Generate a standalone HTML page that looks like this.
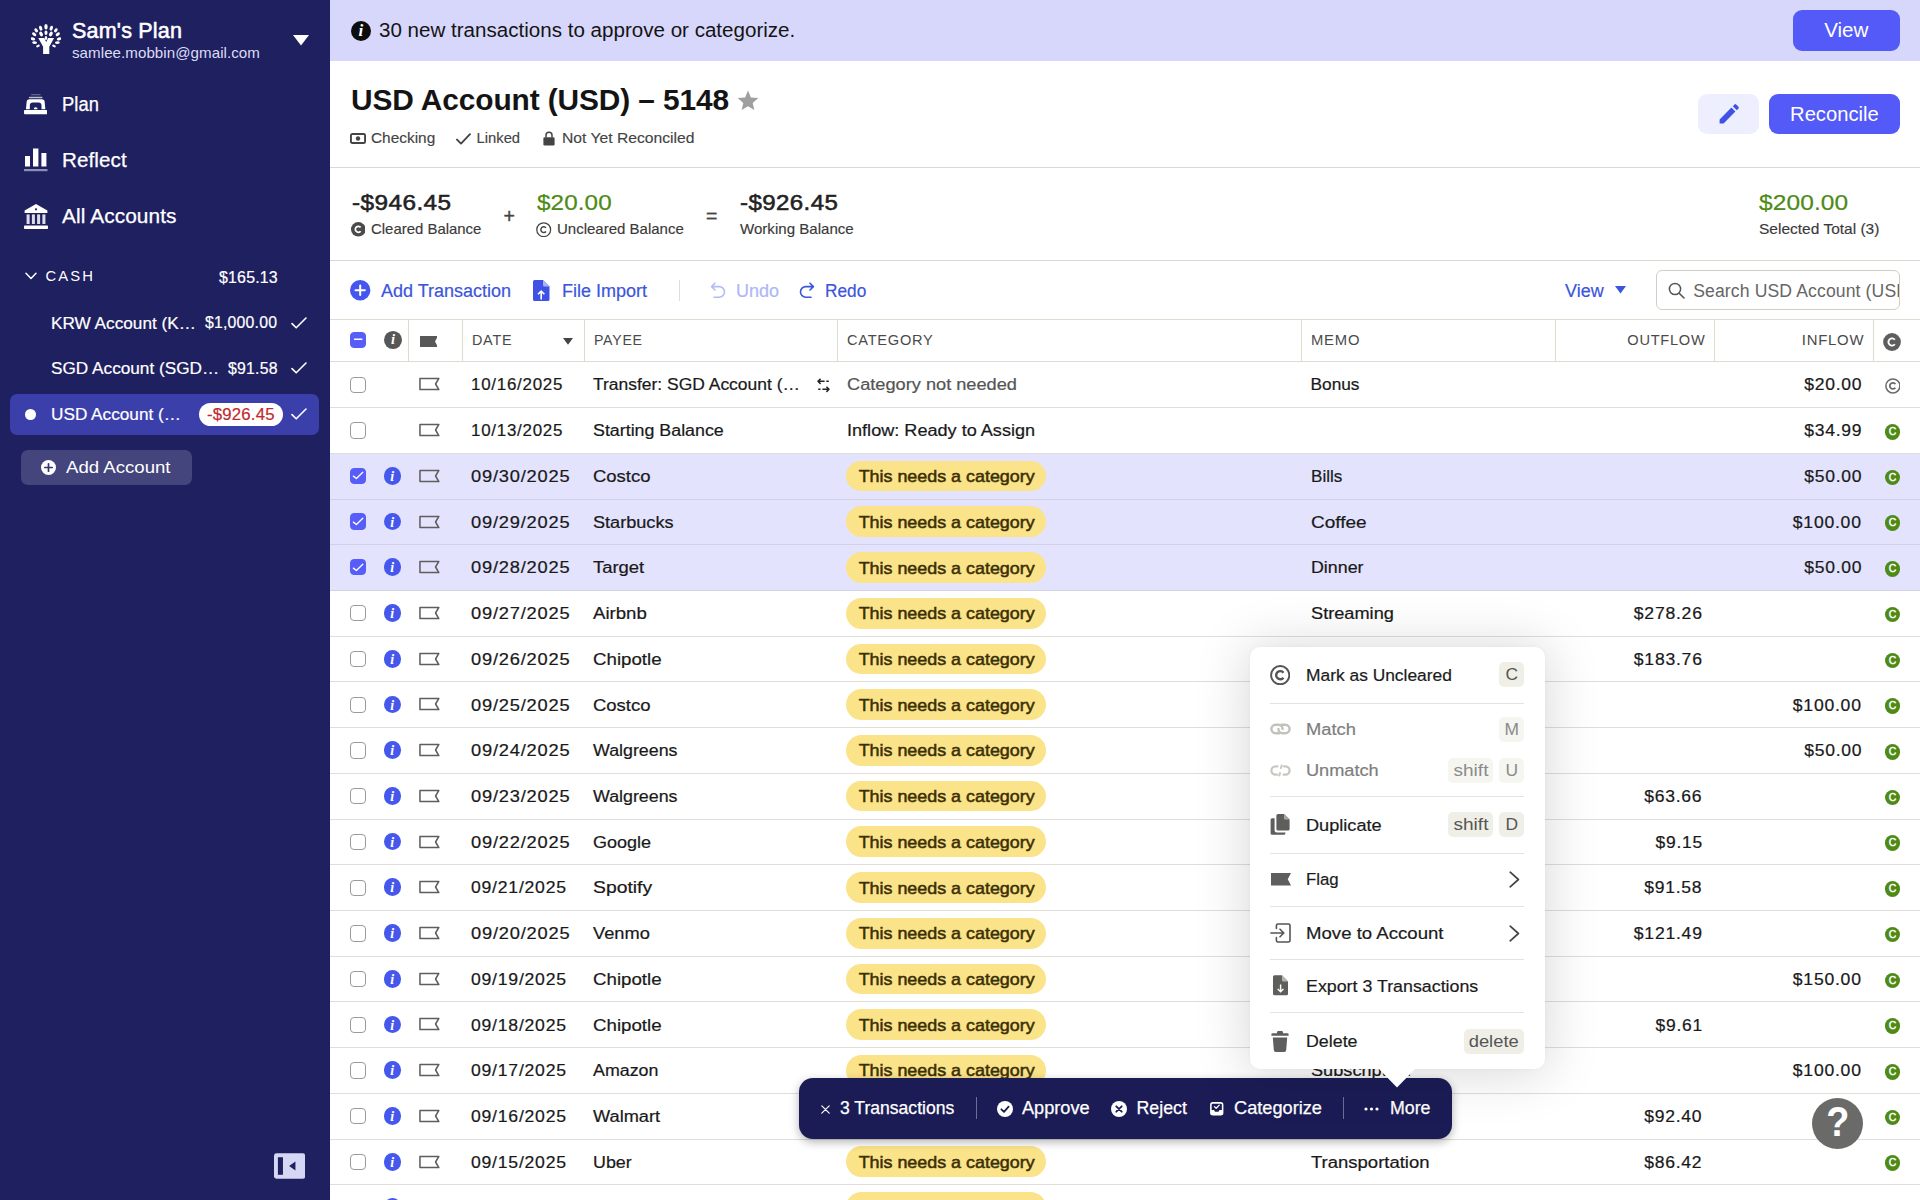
<!DOCTYPE html>
<html lang="en">
<head>
<meta charset="utf-8">
<title>USD Account (USD) – 5148 | Sam's Plan</title>
<style>
*{box-sizing:border-box;margin:0;padding:0}
html,body{width:1920px;height:1200px;overflow:hidden;background:#fff}
body{font-family:"Liberation Sans",Arial,sans-serif;color:#19191a;position:relative;-webkit-font-smoothing:antialiased}
.abs{position:absolute;white-space:nowrap}
svg{display:block}

/* ---------- sidebar ---------- */
#side{position:absolute;left:0;top:0;width:330px;height:1200px;background:#1f205f;color:#fff}
#side .abs{color:#fff}
.nav{font-size:19.5px;left:61.5px;letter-spacing:.1px;-webkit-text-stroke:.25px #fff}
.acct{font-size:17.2px;left:51px}
.amt{font-size:15.6px;letter-spacing:.2px}
.tick{position:absolute;left:291px}

/* ---------- main ---------- */
#main{position:absolute;left:330px;top:0;width:1590px;height:1200px;background:#fff;overflow:hidden}
#banner{position:absolute;left:0;top:0;width:1590px;height:60.5px;background:#d7d7fb}
.btn{position:absolute;background:#535af7;color:#fff;border-radius:9px;text-align:center}
.hl{position:absolute;left:0;width:1590px;height:1px;background:#d9d9d0}
.meta{font-size:14.8px;color:#444;top:130px;line-height:17px}
.bal{font-size:22.6px;font-weight:normal;-webkit-text-stroke:.55px #222;letter-spacing:.4px;top:189.800px;line-height:26px;color:#222}
.bal.g{color:#4d8a16;-webkit-text-stroke:.2px #4d8a16}
.ballab{font-size:14.8px;color:#3a3a3a;top:220.5px;line-height:17px}
.tb{font-size:18px;color:#3b55dd;-webkit-text-stroke:.2px currentColor;top:281px;line-height:21px}

/* ---------- table ---------- */
#thead{position:absolute;left:0;top:319.25px;width:1590px;height:42.7px;border-top:1.5px solid #dcdcd2;border-bottom:1.5px solid #dcdcd2;background:#fff;z-index:2}
.th{position:absolute;top:12.2px;font-size:14.6px;letter-spacing:.75px;color:#4a4a4a;line-height:17px;white-space:nowrap}
.vl{position:absolute;top:0;width:1px;height:41px;background:#dcdcd1}
.row{position:absolute;left:0;width:1590px;height:45.72px;border-bottom:1.3px solid #dedfd6;font-size:17.3px;line-height:20px;background:#fff}
.row.sel{background:#e3e3fd;border-bottom-color:#d2d2e6}
.row>*{position:absolute;white-space:nowrap}
.cb{left:20px;top:14.200px;width:16.3px;height:16.3px;border:1.4px solid #9a9a9a;border-radius:4px;background:#fff}
.cb.on{background:#575df8;border-color:#575df8;top:13.800px}
.cb.on svg{position:absolute;left:-1.4px;top:-1.4px}
.inf{left:53.7px;top:13.1px;width:17.8px;height:17.8px;border-radius:50%;background:#4658ec;color:#fff;font-family:"Liberation Serif","DejaVu Serif",serif;font-style:italic;font-weight:bold;font-size:14px;line-height:19.6px;text-align:center;text-indent:-.6px}
.flag{left:89.1px;top:15px}
.c-date{left:140.5px;top:12.1px}
.c-payee{left:262.5px;top:12.1px}
.xfer{left:487.100px;top:15.400px}
.c-cat{left:517px;top:12.1px}
.c-cat.muted{color:#555}
.pill{left:516.2px;top:6.8px;width:200px;height:30.8px;border-radius:15.4px;background:#fbe389;color:#3a2f05;font-weight:normal;-webkit-text-stroke:.5px #3a2f05;font-size:16.600px;line-height:30.8px;text-align:center}
.c-memo{left:980.5px;top:12.1px}
.c-out{right:217.2px;top:12.1px}
.c-in{right:58px;top:12.1px}
.unclr{left:1554.600px;top:15.700px}
.clr{left:1554.7px;top:15.8px;width:15.6px;height:15.6px;border-radius:50%;background:#4f8a17;color:#fff;font-weight:normal;-webkit-text-stroke:.4px #fff;font-size:10.4px;line-height:15.4px;text-align:center}

/* ---------- popup ---------- */
#menu{z-index:6;position:absolute;left:1250px;top:647px;width:295px;height:422px;background:#fff;border-radius:10px;box-shadow:0 2px 52px 4px rgba(0,0,0,.15),0 0 5px rgba(0,0,0,.03)}
#menu .mi{position:absolute;left:56px;font-size:17.1px;line-height:21px;color:#1b1b1b;white-space:nowrap}
#menu .mi.dis{color:#7d7d7d}
#menu .ico{position:absolute;left:20px}
#menu .dv{position:absolute;left:19.8px;width:254.6px;height:1px;background:#e3e3e0}
.key{position:absolute;height:25px;border-radius:5px;background:#efefe7;color:#555;font-size:17.4px;line-height:25px;text-align:center}
.key.dis{background:#f6f6f1;color:#8a8a8a}

/* ---------- action bar ---------- */
#bar{z-index:5;position:absolute;left:799px;top:1078px;width:652.5px;height:60.5px;border-radius:14px;background:#1b1c55;box-shadow:0 3px 10px rgba(0,0,0,.3)}
#bar .t{position:absolute;top:20.100px;font-size:17.800px;line-height:21px;color:#fff;white-space:nowrap;-webkit-text-stroke:.25px #fff}
#bar .sep{position:absolute;top:19px;width:1.3px;height:22px;background:#6c6d96}
#help{position:absolute;left:1812px;top:1097.8px;width:51px;height:51px;border-radius:50%;background:#6a6a69;color:#fff;font-weight:bold;font-size:42px;line-height:48.5px;text-align:center}
.abs,.row>*,.th,.mi,.t{transform-origin:left center}
.c-out,.c-in,.th.r{transform-origin:right center}
.pt,.ct{display:inline-block;transform-origin:center center}
.pt{position:relative;top:1.500px}
.c-date,.c-out,.c-in{letter-spacing:.75px}
.c-date,.c-payee,.c-cat,.c-memo,.c-out,.c-in{-webkit-text-stroke:.22px currentColor}
.acct,.amt{-webkit-text-stroke:.2px currentColor}
#menu .mi{-webkit-text-stroke:.2px currentColor}
.ballab,.meta{-webkit-text-stroke:.15px currentColor}
#t2{transform:scaleX(0.941)}
#t22{transform:scaleX(0.959)}
#t0{transform:scaleX(0.962)}
#t24{transform:scaleX(0.969)}
#t29,#t34{transform:scaleX(0.98)}
#t115{transform:scaleX(0.984)}
#t23{transform:scaleX(0.985)}
#t41,#t120{transform:scaleX(0.988)}
#t77,#t93{transform:scaleX(1.008)}
#t15{transform:scaleX(1.009)}
#t30{transform:scaleX(1.01)}
#t6,#t17,#t33,#t37,#t42,#t52,#t69,#t73,#t81,#t102,#t107{transform:scaleX(1.014)}
#t7,#t26{transform:scaleX(1.016)}
#t109{transform:scaleX(1.017)}
#t47,#t57,#t61,#t65,#t85,#t89,#t98{transform:scaleX(1.018)}
#t19,#t78,#t86,#t90,#t94,#t99,#t103{transform:scaleX(1.019)}
#t5,#t28{transform:scaleX(1.02)}
#t121{transform:scaleX(1.021)}
#t11,#t122{transform:scaleX(1.023)}
#t35,#t51,#t67,#t71,#t95{transform:scaleX(1.031)}
#t104{transform:scaleX(1.033)}
#t1{transform:scaleX(1.036)}
#t12,#t75{transform:scaleX(1.041)}
#t117,#t118{transform:scaleX(1.042)}
#t36{transform:scaleX(1.047)}
#t21,#t44{transform:scaleX(1.048)}
#t10{transform:scaleX(1.05)}
#t97{transform:scaleX(1.051)}
#t56{transform:scaleX(1.052)}
#t31{transform:scaleX(1.053)}
#t100{transform:scaleX(1.054)}
#t119{transform:scaleX(1.055)}
#t3{transform:scaleX(1.056)}
#t38,#t43,#t48,#t53,#t58,#t62,#t66,#t70,#t74,#t82,#t83{transform:scaleX(1.057)}
#t13{transform:scaleX(1.06)}
#t113{transform:scaleX(1.062)}
#t111{transform:scaleX(1.063)}
#t18{transform:scaleX(1.064)}
#t4,#t49{transform:scaleX(1.067)}
#t39,#t63{transform:scaleX(1.069)}
#t106,#t110{transform:scaleX(1.07)}
#t8{transform:scaleX(1.072)}
#t16{transform:scaleX(1.073)}
#t54{transform:scaleX(1.076)}
#t14{transform:scaleX(1.077)}
#t40,#t45,#t50,#t55,#t60,#t64,#t68,#t72,#t76,#t80,#t84,#t88,#t92,#t96,#t101,#t105,#t108{transform:scaleX(1.078)}
#t59,#t87,#t91{transform:scaleX(1.082)}
#t9{transform:scaleX(1.083)}
#t20{transform:scaleX(1.084)}
#t116{transform:scaleX(1.088)}
#t112,#t114{transform:scaleX(1.097)}
#t46{transform:scaleX(1.099)}
#t79{transform:scaleX(1.118)}
</style>
</head>
<body>

<div id="side">
  <!-- logo tree -->
  <svg class="abs" style="left:30.600px;top:24px" width="30.400" height="30" viewBox="0 0 30.400 30"><g fill="#fff"><path d="M7.3 14.100H13.300L15.200 17.900 17.100 14.100H23.100L18.300 22.800V30H12.100V22.800Z"/><ellipse cx="15" cy="2.8" rx="1.7" ry="2.7" transform="rotate(0 15 2.8)"/><ellipse cx="9.7" cy="4.2" rx="1.55" ry="2.5" transform="rotate(-20 9.7 4.2)"/><ellipse cx="20.3" cy="4.2" rx="1.55" ry="2.5" transform="rotate(20 20.3 4.2)"/><ellipse cx="5.2" cy="6.3" rx="1.5" ry="2.3" transform="rotate(-38 5.2 6.3)"/><ellipse cx="24.8" cy="6.3" rx="1.5" ry="2.3" transform="rotate(38 24.8 6.3)"/><ellipse cx="3.2" cy="10.2" rx="1.5" ry="2.4" transform="rotate(-53 3.2 10.2)"/><ellipse cx="10.1" cy="10" rx="1.7" ry="2.5" transform="rotate(-29 10.1 10)"/><ellipse cx="15" cy="8.8" rx="1.5" ry="2.3" transform="rotate(0 15 8.8)"/><ellipse cx="19.9" cy="10" rx="1.7" ry="2.5" transform="rotate(29 19.9 10)"/><ellipse cx="26.8" cy="10.2" rx="1.5" ry="2.4" transform="rotate(53 26.8 10.2)"/><ellipse cx="1.9" cy="14.8" rx="1.45" ry="2.3" transform="rotate(-72 1.9 14.8)"/><ellipse cx="28.1" cy="14.8" rx="1.45" ry="2.3" transform="rotate(72 28.1 14.8)"/><ellipse cx="15" cy="13.9" rx="1.3" ry="2.0" transform="rotate(0 15 13.9)"/><ellipse cx="3.6" cy="18.6" rx="1.45" ry="2.4" transform="rotate(-88 3.6 18.6)"/><ellipse cx="26.4" cy="18.6" rx="1.45" ry="2.4" transform="rotate(88 26.4 18.6)"/><ellipse cx="7" cy="22" rx="1.2" ry="1.9" transform="rotate(-111 7 22)"/><ellipse cx="23" cy="22" rx="1.2" ry="1.9" transform="rotate(111 23 22)"/></g></svg>
  <div id="t0" class="abs" style="left:71.5px;top:18px;font-size:22.4px;font-weight:normal;-webkit-text-stroke:.55px #fff;line-height:26px;letter-spacing:.2px">Sam's Plan</div>
  <div id="t1" class="abs" style="left:71.5px;top:44.5px;font-size:14.6px;line-height:17px;color:#dcdcf5;letter-spacing:.05px">samlee.mobbin@gmail.com</div>
  <svg class="abs" style="left:293px;top:34.5px" width="16" height="11" viewBox="0 0 16 11"><path d="M0 0H16L8 10.6Z" fill="#fff"/></svg>

  <!-- Plan -->
  <svg class="abs" style="left:24px;top:94px" width="23.300" height="20.500" viewBox="0 0 24 21">
    <g fill="#fff">
      <rect x="7.200" y=".1" width="10" height="1.100" rx=".5" opacity=".4"/>
      <rect x="5" y="2.700" width="14" height="1.500" rx=".6" opacity=".7"/>
      <path d="M2 15.600 2.700 8.200A3 3 0 0 1 5.700 5.400H18.300A3 3 0 0 1 21.300 8.200L22 15.600ZM6 15.600V11.600a3 3 0 0 1 3-3h6a3 3 0 0 1 3 3v4z" fill-rule="evenodd"/>
      <path d="M10 15.600a2 2 0 0 1 4 0z"/>
      <rect x="0" y="16.400" width="24" height="4.400" rx="1"/>
    </g>
  </svg>
  <div id="t2" class="abs nav" style="top:93px;line-height:23px">Plan</div>

  <!-- Reflect -->
  <svg class="abs" style="left:24px;top:148px" width="24" height="24" viewBox="0 0 24 24">
    <g fill="#fff">
      <rect x="1" y="8" width="5" height="10.5"/>
      <rect x="9" y="0.5" width="5.4" height="18"/>
      <rect x="17.4" y="5" width="5" height="13.5"/>
      <rect x="0" y="21" width="23.5" height="2.2" opacity=".5"/>
    </g>
  </svg>
  <div id="t3" class="abs nav" style="top:149px;line-height:23px">Reflect</div>

  <!-- All accounts -->
  <svg class="abs" style="left:24px;top:204px" width="24" height="26" viewBox="0 0 24 26">
    <g fill="#fff">
      <path d="M12 0 23.4 6.6V9H.6V6.6zM12 4.2a1.1 1.1 0 1 0 0 2.2 1.1 1.1 0 0 0 0-2.2z" fill-rule="evenodd"/>
      <rect x="2.6" y="10.4" width="3" height="9.6" opacity=".85"/>
      <rect x="7.9" y="10.4" width="3" height="9.6" opacity=".85"/>
      <rect x="13.1" y="10.4" width="3" height="9.6" opacity=".85"/>
      <rect x="18.4" y="10.4" width="3" height="9.6" opacity=".85"/>
      <rect x="0" y="21.6" width="24" height="3.4" rx=".8"/>
    </g>
  </svg>
  <div id="t4" class="abs nav" style="top:205px;line-height:23px">All Accounts</div>

  <!-- CASH group -->
  <svg class="abs" style="left:24.5px;top:271.5px" width="12" height="8" viewBox="0 0 12 8"><path d="M1 1.2 6 6.4 11 1.2" fill="none" stroke="#fff" stroke-width="1.5" stroke-linecap="round" stroke-linejoin="round"/></svg>
  <div class="abs" style="left:45.5px;top:267.5px;font-size:14.8px;line-height:17px;letter-spacing:2.1px">CASH</div>
  <div id="t5" class="abs amt" style="left:218.5px;top:269px;line-height:17px">$165.13</div>

  <div class="abs acct" style="top:312.5px;line-height:20px">KRW Account (K…</div>
  <div id="t6" class="abs amt" style="left:204.5px;top:314px;line-height:17px">$1,000.00</div>
  <svg class="tick" style="top:316.5px" width="16" height="12" viewBox="0 0 16 12"><path d="M1 6.6 5.2 10.8 15 1" fill="none" stroke="#fff" stroke-width="1.6" stroke-linecap="round" stroke-linejoin="round"/></svg>

  <div class="abs acct" style="top:358.2px;line-height:20px">SGD Account (SGD…</div>
  <div id="t7" class="abs amt" style="left:227.5px;top:359.8px;line-height:17px">$91.58</div>
  <svg class="tick" style="top:362.2px" width="16" height="12" viewBox="0 0 16 12"><path d="M1 6.6 5.2 10.8 15 1" fill="none" stroke="#fff" stroke-width="1.6" stroke-linecap="round" stroke-linejoin="round"/></svg>

  <div class="abs" style="left:10px;top:393.8px;width:308.8px;height:40.8px;border-radius:7px;background:#3b3fa9"></div>
  <div class="abs" style="left:25px;top:409px;width:10.6px;height:10.6px;border-radius:50%;background:#fff"></div>
  <div class="abs acct" style="top:404px;line-height:20px">USD Account (…</div>
  <div class="abs" style="left:198.8px;top:402.6px;width:84.6px;height:23px;border-radius:11.5px;background:#fff"></div>
  <div id="t8" class="abs amt" style="left:207px;top:405.6px;line-height:17px;color:#c02a2e">-$926.45</div>
  <svg class="tick" style="top:408px" width="16" height="12" viewBox="0 0 16 12"><path d="M1 6.6 5.2 10.8 15 1" fill="none" stroke="#fff" stroke-width="1.6" stroke-linecap="round" stroke-linejoin="round"/></svg>

  <div class="abs" style="left:20.5px;top:449.5px;width:171.5px;height:35px;border-radius:7px;background:#44457c"></div>
  <svg class="abs" style="left:40.5px;top:459.5px" width="15" height="15" viewBox="0 0 15 15"><circle cx="7.5" cy="7.5" r="7.5" fill="#fff"/><path d="M7.5 3.8v7.4M3.8 7.5h7.4" stroke="#33356f" stroke-width="1.7" stroke-linecap="round"/></svg>
  <div id="t9" class="abs" style="left:66px;top:457px;font-size:17.2px;line-height:20px">Add Account</div>

  <!-- collapse -->
  <svg class="abs" style="left:273.700px;top:1152.500px" width="31.200" height="26" viewBox="0 0 32 26"><rect width="32" height="26" rx="2.5" fill="#d6d7f4"/><rect x="4" y="4" width="5.2" height="18" fill="#1f205f"/><path d="M22 8.500v9l-6.500-4.500z" fill="#1f205f"/></svg>
</div>


<div id="main">
<div id="banner"></div>
<div class="abs" style="left:20.800px;top:21.300px;width:20px;height:20px;border-radius:50%;background:#0c0c0c;color:#fff;font-family:'Liberation Serif','DejaVu Serif',serif;font-style:italic;font-weight:bold;font-size:17px;line-height:19.5px;text-align:center">i</div>
<div id="t10" class="abs" style="left:48.500px;top:19.400px;font-size:19.600px;line-height:23px;color:#141414">30 new transactions to approve or categorize.</div>
<div class="btn" style="left:1463px;top:10px;width:106.6px;height:40.5px;font-size:20.6px;line-height:40.5px">View</div>

<div id="t11" class="abs" id="title" style="left:20.5px;top:82.300px;font-size:29.200px;font-weight:bold;line-height:36px;color:#141414;letter-spacing:-.1px">USD Account (USD) – 5148</div>
<svg class="abs" style="left:406.5px;top:90px" width="22" height="21" viewBox="0 0 22 21"><path d="M11 0.6 13.9 7.4 21.3 8 15.7 12.9 17.4 20.1 11 16.3 4.6 20.1 6.3 12.9 0.7 8 8.1 7.4Z" fill="#9f9f9f"/></svg>

<!-- meta row -->
<svg class="abs" style="left:20px;top:133px" width="16" height="11" viewBox="0 0 16 11"><rect x=".95" y=".95" width="14.100" height="9.100" rx="1.400" fill="none" stroke="#444" stroke-width="1.900"/><circle cx="8" cy="5.500" r="2.200" fill="#444"/></svg>
<div id="t12" class="abs meta" style="left:40.5px">Checking</div>
<svg class="abs" style="left:125.500px;top:132.500px" width="15" height="12" viewBox="0 0 15 12"><path d="M1 6.600 5 10.600 14 1.200" fill="none" stroke="#444" stroke-width="1.900" stroke-linecap="round" stroke-linejoin="round"/></svg>
<div class="abs meta" style="left:146.5px">Linked</div>
<svg class="abs" style="left:213px;top:131px" width="12" height="15" viewBox="0 0 12 15"><path d="M3 6.4V4.2a3 3 0 0 1 6 0v2.2" fill="none" stroke="#444" stroke-width="1.5"/><rect x=".4" y="6.2" width="11.2" height="8.4" rx="1.4" fill="#444"/></svg>
<div id="t13" class="abs meta" style="left:232px">Not Yet Reconciled</div>

<div class="abs" style="left:1368.4px;top:94.2px;width:60.400px;height:40px;border-radius:9px;background:#eeeffe"></div>
<svg class="abs" style="left:1388px;top:103px" width="22" height="22" viewBox="0 0 22 22"><path d="M1.6 16.4 13.4 4.6l4 4L5.6 20.4H1.6zM14.8 3.2l1.7-1.7a1.2 1.2 0 0 1 1.7 0l2.3 2.3a1.2 1.2 0 0 1 0 1.7l-1.7 1.7z" fill="#4052e6"/></svg>
<div class="btn" style="left:1439.2px;top:94.2px;width:130.4px;height:40px;font-size:20.2px;line-height:40px">Reconcile</div>

<div class="hl" style="top:167px"></div>

<!-- balances -->
<div id="t14" class="abs bal" style="left:21.5px">-$946.45</div>
<svg class="abs" style="left:20.8px;top:222.4px" width="14.6" height="14.6" viewBox="0 0 16 16"><circle cx="8" cy="8" r="8" fill="#4a4a4a"/><path d="M10.6 5.9A3.3 3.3 0 1 0 10.6 10.1" fill="none" stroke="#fff" stroke-width="1.9"/></svg>
<div id="t15" class="abs ballab" style="left:40.600px">Cleared Balance</div>
<div class="abs" style="left:173.400px;top:204.500px;font-size:19.500px;line-height:22px;color:#444;-webkit-text-stroke:.4px #444">+</div>
<div id="t16" class="abs bal g" style="left:206.5px;font-weight:normal;letter-spacing:.1px">$20.00</div>
<svg class="abs" style="left:206.3px;top:222px" width="15.4" height="15.4" viewBox="0 0 16 16"><circle cx="8" cy="8" r="7.2" fill="none" stroke="#444" stroke-width="1.3"/><path d="M10.4 6.1A3 3 0 1 0 10.4 9.9" fill="none" stroke="#444" stroke-width="1.5"/></svg>
<div id="t17" class="abs ballab" style="left:226.8px">Uncleared Balance</div>
<div class="abs" style="left:376px;top:204.500px;font-size:19.500px;line-height:22px;color:#444;-webkit-text-stroke:.4px #444">=</div>
<div id="t18" class="abs bal" style="left:410px">-$926.45</div>
<div id="t19" class="abs ballab" style="left:409.5px">Working Balance</div>
<div id="t20" class="abs bal g" style="left:1428.5px;font-weight:normal;letter-spacing:.1px">$200.00</div>
<div id="t21" class="abs ballab" style="left:1428.5px">Selected Total (3)</div>

<div class="hl" style="top:260px"></div>

<!-- toolbar -->
<svg class="abs" style="left:20.4px;top:280.2px" width="20.4" height="20.4" viewBox="0 0 20 20"><circle cx="10" cy="10" r="10" fill="#4556ef"/><path d="M10 5.4v9.2M5.4 10h9.2" stroke="#fff" stroke-width="2" stroke-linecap="round"/></svg>
<div class="abs tb" style="left:51px">Add Transaction</div>
<svg class="abs" style="left:203.3px;top:279.5px" width="16.5" height="21" viewBox="0 0 16.5 21"><path d="M1.6 0H10l6.5 6.5V19.4a1.6 1.6 0 0 1-1.6 1.6H1.6A1.6 1.6 0 0 1 0 19.4V1.6A1.6 1.6 0 0 1 1.6 0z" fill="#4052e6"/><path d="M10 0v5a1.5 1.5 0 0 0 1.5 1.5h5z" fill="#aab3f7"/><path d="M8.2 19.5v-7.8M5 14.3l3.2-3.2 3.2 3.2" fill="none" stroke="#fff" stroke-width="1.6"/></svg>
<div class="abs tb" style="left:232px">File Import</div>
<div class="abs" style="left:348.6px;top:279.5px;width:1.2px;height:21px;background:#ddd"></div>
<svg class="abs" style="left:379.5px;top:281.5px" width="16" height="17" viewBox="0 0 16 17"><path d="M5 1.2 1.6 4.6 5 8M2 4.6h7.2a5.3 5.3 0 0 1 0 10.6H4" fill="none" stroke="#b3bcf7" stroke-width="1.6" stroke-linecap="round" stroke-linejoin="round"/></svg>
<div class="abs tb" style="left:406px;color:#aeb7f6">Undo</div>
<svg class="abs" style="left:469.3px;top:281.5px" width="16" height="17" viewBox="0 0 16 17"><path d="M11 1.2 14.4 4.6 11 8M14 4.6H6.8a5.3 5.3 0 0 0 0 10.6H12" fill="none" stroke="#3b55dd" stroke-width="1.6" stroke-linecap="round" stroke-linejoin="round"/></svg>
<div id="t22" class="abs tb" style="left:495px">Redo</div>

<div class="abs tb" style="left:1235px">View</div>
<svg class="abs" style="left:1284.6px;top:286px" width="11" height="8" viewBox="0 0 11 8"><path d="M0 0H11L5.5 7.4Z" fill="#3b55dd"/></svg>
<div class="abs" style="left:1326.2px;top:270px;width:243.4px;height:40px;border:1.2px solid #cfcfc8;border-radius:6px;background:#fff;overflow:hidden">
  <svg style="position:absolute;left:11px;top:11px" width="17" height="17" viewBox="0 0 17 17"><circle cx="7" cy="7" r="5.6" fill="none" stroke="#555" stroke-width="1.5"/><path d="M11.2 11.2 16 16" stroke="#555" stroke-width="1.6" stroke-linecap="round"/></svg>
  <div style="position:absolute;left:36px;top:9.600px;font-size:17.600px;letter-spacing:.12px;line-height:21px;color:#666;white-space:nowrap">Search USD Account (USD) – 5148</div>
</div>

<div id="thead">
  <span class="cb on" style="position:absolute;left:20px;top:11.500px;width:16.4px;height:16.4px"><svg viewBox="0 0 16 16" width="16.400" height="16.400"><path d="M4.400 8h7.200" stroke="#fff" stroke-width="1.350" stroke-linecap="round"/></svg></span>
  <span style="position:absolute;left:54.200px;top:11.000px;width:17.900px;height:17.900px;border-radius:50%;background:#575757;color:#fff;font-family:'Liberation Serif','DejaVu Serif',serif;font-style:italic;font-weight:bold;font-size:14.500px;line-height:17.900px;text-align:center">i</span>
  <div class="vl" style="left:77.950px"></div>
  <svg style="position:absolute;left:89.700px;top:15.500px" width="17.800" height="11" viewBox="0 0 18 11"><path d="M0 0H18L15.200 5.500 18 11H0Z" fill="#585858"/></svg>
  <div class="vl" style="left:131.750px"></div>
  <span class="th" style="left:141.500px" id="t23">DATE</span>
  <svg style="position:absolute;left:233.300px;top:18.000px" width="10" height="6.800" viewBox="0 0 10 6.800"><path d="M0 0H10L5 6.800Z" fill="#444"/></svg>
  <div class="vl" style="left:253.750px"></div>
  <span class="th" style="left:263.500px" id="t24">PAYEE</span>
  <div class="vl" style="left:507.250px"></div>
  <span class="th" style="left:517px" id="t25">CATEGORY</span>
  <div class="vl" style="left:970.500px"></div>
  <span class="th" style="left:980.800px" id="t26">MEMO</span>
  <div class="vl" style="left:1224.750px"></div>
  <span class="th r" style="right:214.500px" id="t27">OUTFLOW</span>
  <div class="vl" style="left:1384px"></div>
  <span class="th r" style="right:55.300px" id="t28">INFLOW</span>
  <div class="vl" style="left:1543px"></div>
  <svg style="position:absolute;left:1552.500px;top:12.250px" width="18" height="18" viewBox="0 0 16 16"><circle cx="8" cy="8" r="7.900" fill="#5e5e5e"/><path d="M10.500 6A3.200 3.200 0 1 0 10.500 10" fill="none" stroke="#fff" stroke-width="1.700"/></svg>
</div>

<div class="row" style="top:362.40px"><span class="cb"></span><svg class="flag" viewBox="0 0 22 14" width="21.2" height="14"><path d="M1 1.2H20.6L17.2 7 20.6 12.8H1Z" fill="none" stroke="#5e5e5e" stroke-width="1.6" stroke-linejoin="round"/></svg><span class="c-date" id="t29">10/16/2025</span><span class="c-payee" id="t30">Transfer: SGD Account (…</span><svg class="xfer" viewBox="0 0 13 15" width="13" height="15"><g fill="none" stroke="#222" stroke-width="1.5" stroke-linejoin="round"><path d="M3.6 .7 1 3.300 3.600 5.900M1 3.300H7.600M9.300 3.300H11.800"/><path d="M9.400 8.700 12 11.300 9.400 13.900M12 11.300H5.400M3.500 11.300H1.200"/></g></svg><span class="c-cat muted" id="t31">Category not needed</span><span class="c-memo" id="t32">Bonus</span><span class="c-in" id="t33">$20.00</span><svg class="unclr" viewBox="0 0 16 16" width="15.8" height="15.8"><circle cx="8" cy="8" r="7.1" fill="none" stroke="#6a6a6a" stroke-width="1.5"/><path d="M10.500 6.200A3.100 3.100 0 1 0 10.500 9.800" fill="none" stroke="#6a6a6a" stroke-width="1.800"/></svg></div>
<div class="row" style="top:408.12px"><span class="cb"></span><svg class="flag" viewBox="0 0 22 14" width="21.2" height="14"><path d="M1 1.2H20.6L17.2 7 20.6 12.8H1Z" fill="none" stroke="#5e5e5e" stroke-width="1.6" stroke-linejoin="round"/></svg><span class="c-date" id="t34">10/13/2025</span><span class="c-payee" id="t35">Starting Balance</span><span class="c-cat" id="t36">Inflow: Ready to Assign</span><span class="c-in" id="t37">$34.99</span><span class="clr">C</span></div>
<div class="row sel" style="top:453.84px"><span class="cb on"><svg viewBox="0 0 16 16" width="16" height="16"><path d="M3.4 9.1 6.4 11.5 12.8 5.3" fill="none" stroke="#fff" stroke-width="1.35" stroke-linecap="round" stroke-linejoin="round"/></svg></span><span class="inf">i</span><svg class="flag" viewBox="0 0 22 14" width="21.2" height="14"><path d="M1 1.2H20.6L17.2 7 20.6 12.8H1Z" fill="none" stroke="#5e5e5e" stroke-width="1.6" stroke-linejoin="round"/></svg><span class="c-date" id="t38">09/30/2025</span><span class="c-payee" id="t39">Costco</span><span class="pill"><span class="pt" id="t40">This needs a category</span></span><span class="c-memo" id="t41">Bills</span><span class="c-in" id="t42">$50.00</span><span class="clr">C</span></div>
<div class="row sel" style="top:499.56px"><span class="cb on"><svg viewBox="0 0 16 16" width="16" height="16"><path d="M3.4 9.1 6.4 11.5 12.8 5.3" fill="none" stroke="#fff" stroke-width="1.35" stroke-linecap="round" stroke-linejoin="round"/></svg></span><span class="inf">i</span><svg class="flag" viewBox="0 0 22 14" width="21.2" height="14"><path d="M1 1.2H20.6L17.2 7 20.6 12.8H1Z" fill="none" stroke="#5e5e5e" stroke-width="1.6" stroke-linejoin="round"/></svg><span class="c-date" id="t43">09/29/2025</span><span class="c-payee" id="t44">Starbucks</span><span class="pill"><span class="pt" id="t45">This needs a category</span></span><span class="c-memo" id="t46">Coffee</span><span class="c-in" id="t47">$100.00</span><span class="clr">C</span></div>
<div class="row sel" style="top:545.28px"><span class="cb on"><svg viewBox="0 0 16 16" width="16" height="16"><path d="M3.4 9.1 6.4 11.5 12.8 5.3" fill="none" stroke="#fff" stroke-width="1.35" stroke-linecap="round" stroke-linejoin="round"/></svg></span><span class="inf">i</span><svg class="flag" viewBox="0 0 22 14" width="21.2" height="14"><path d="M1 1.2H20.6L17.2 7 20.6 12.8H1Z" fill="none" stroke="#5e5e5e" stroke-width="1.6" stroke-linejoin="round"/></svg><span class="c-date" id="t48">09/28/2025</span><span class="c-payee" id="t49">Target</span><span class="pill"><span class="pt" id="t50">This needs a category</span></span><span class="c-memo" id="t51">Dinner</span><span class="c-in" id="t52">$50.00</span><span class="clr">C</span></div>
<div class="row" style="top:591.00px"><span class="cb"></span><span class="inf">i</span><svg class="flag" viewBox="0 0 22 14" width="21.2" height="14"><path d="M1 1.2H20.6L17.2 7 20.6 12.8H1Z" fill="none" stroke="#5e5e5e" stroke-width="1.6" stroke-linejoin="round"/></svg><span class="c-date" id="t53">09/27/2025</span><span class="c-payee" id="t54">Airbnb</span><span class="pill"><span class="pt" id="t55">This needs a category</span></span><span class="c-memo" id="t56">Streaming</span><span class="c-out" id="t57">$278.26</span><span class="clr">C</span></div>
<div class="row" style="top:636.72px"><span class="cb"></span><span class="inf">i</span><svg class="flag" viewBox="0 0 22 14" width="21.2" height="14"><path d="M1 1.2H20.6L17.2 7 20.6 12.8H1Z" fill="none" stroke="#5e5e5e" stroke-width="1.6" stroke-linejoin="round"/></svg><span class="c-date" id="t58">09/26/2025</span><span class="c-payee" id="t59">Chipotle</span><span class="pill"><span class="pt" id="t60">This needs a category</span></span><span class="c-out" id="t61">$183.76</span><span class="clr">C</span></div>
<div class="row" style="top:682.44px"><span class="cb"></span><span class="inf">i</span><svg class="flag" viewBox="0 0 22 14" width="21.2" height="14"><path d="M1 1.2H20.6L17.2 7 20.6 12.8H1Z" fill="none" stroke="#5e5e5e" stroke-width="1.6" stroke-linejoin="round"/></svg><span class="c-date" id="t62">09/25/2025</span><span class="c-payee" id="t63">Costco</span><span class="pill"><span class="pt" id="t64">This needs a category</span></span><span class="c-in" id="t65">$100.00</span><span class="clr">C</span></div>
<div class="row" style="top:728.16px"><span class="cb"></span><span class="inf">i</span><svg class="flag" viewBox="0 0 22 14" width="21.2" height="14"><path d="M1 1.2H20.6L17.2 7 20.6 12.8H1Z" fill="none" stroke="#5e5e5e" stroke-width="1.6" stroke-linejoin="round"/></svg><span class="c-date" id="t66">09/24/2025</span><span class="c-payee" id="t67">Walgreens</span><span class="pill"><span class="pt" id="t68">This needs a category</span></span><span class="c-in" id="t69">$50.00</span><span class="clr">C</span></div>
<div class="row" style="top:773.88px"><span class="cb"></span><span class="inf">i</span><svg class="flag" viewBox="0 0 22 14" width="21.2" height="14"><path d="M1 1.2H20.6L17.2 7 20.6 12.8H1Z" fill="none" stroke="#5e5e5e" stroke-width="1.6" stroke-linejoin="round"/></svg><span class="c-date" id="t70">09/23/2025</span><span class="c-payee" id="t71">Walgreens</span><span class="pill"><span class="pt" id="t72">This needs a category</span></span><span class="c-out" id="t73">$63.66</span><span class="clr">C</span></div>
<div class="row" style="top:819.60px"><span class="cb"></span><span class="inf">i</span><svg class="flag" viewBox="0 0 22 14" width="21.2" height="14"><path d="M1 1.2H20.6L17.2 7 20.6 12.8H1Z" fill="none" stroke="#5e5e5e" stroke-width="1.6" stroke-linejoin="round"/></svg><span class="c-date" id="t74">09/22/2025</span><span class="c-payee" id="t75">Google</span><span class="pill"><span class="pt" id="t76">This needs a category</span></span><span class="c-out" id="t77">$9.15</span><span class="clr">C</span></div>
<div class="row" style="top:865.32px"><span class="cb"></span><span class="inf">i</span><svg class="flag" viewBox="0 0 22 14" width="21.2" height="14"><path d="M1 1.2H20.6L17.2 7 20.6 12.8H1Z" fill="none" stroke="#5e5e5e" stroke-width="1.6" stroke-linejoin="round"/></svg><span class="c-date" id="t78">09/21/2025</span><span class="c-payee" id="t79">Spotify</span><span class="pill"><span class="pt" id="t80">This needs a category</span></span><span class="c-out" id="t81">$91.58</span><span class="clr">C</span></div>
<div class="row" style="top:911.04px"><span class="cb"></span><span class="inf">i</span><svg class="flag" viewBox="0 0 22 14" width="21.2" height="14"><path d="M1 1.2H20.6L17.2 7 20.6 12.8H1Z" fill="none" stroke="#5e5e5e" stroke-width="1.6" stroke-linejoin="round"/></svg><span class="c-date" id="t82">09/20/2025</span><span class="c-payee" id="t83">Venmo</span><span class="pill"><span class="pt" id="t84">This needs a category</span></span><span class="c-out" id="t85">$121.49</span><span class="clr">C</span></div>
<div class="row" style="top:956.76px"><span class="cb"></span><span class="inf">i</span><svg class="flag" viewBox="0 0 22 14" width="21.2" height="14"><path d="M1 1.2H20.6L17.2 7 20.6 12.8H1Z" fill="none" stroke="#5e5e5e" stroke-width="1.6" stroke-linejoin="round"/></svg><span class="c-date" id="t86">09/19/2025</span><span class="c-payee" id="t87">Chipotle</span><span class="pill"><span class="pt" id="t88">This needs a category</span></span><span class="c-in" id="t89">$150.00</span><span class="clr">C</span></div>
<div class="row" style="top:1002.48px"><span class="cb"></span><span class="inf">i</span><svg class="flag" viewBox="0 0 22 14" width="21.2" height="14"><path d="M1 1.2H20.6L17.2 7 20.6 12.8H1Z" fill="none" stroke="#5e5e5e" stroke-width="1.6" stroke-linejoin="round"/></svg><span class="c-date" id="t90">09/18/2025</span><span class="c-payee" id="t91">Chipotle</span><span class="pill"><span class="pt" id="t92">This needs a category</span></span><span class="c-out" id="t93">$9.61</span><span class="clr">C</span></div>
<div class="row" style="top:1048.20px"><span class="cb"></span><span class="inf">i</span><svg class="flag" viewBox="0 0 22 14" width="21.2" height="14"><path d="M1 1.2H20.6L17.2 7 20.6 12.8H1Z" fill="none" stroke="#5e5e5e" stroke-width="1.6" stroke-linejoin="round"/></svg><span class="c-date" id="t94">09/17/2025</span><span class="c-payee" id="t95">Amazon</span><span class="pill"><span class="pt" id="t96">This needs a category</span></span><span class="c-memo" id="t97">Subscription</span><span class="c-in" id="t98">$100.00</span><span class="clr">C</span></div>
<div class="row" style="top:1093.92px"><span class="cb"></span><span class="inf">i</span><svg class="flag" viewBox="0 0 22 14" width="21.2" height="14"><path d="M1 1.2H20.6L17.2 7 20.6 12.8H1Z" fill="none" stroke="#5e5e5e" stroke-width="1.6" stroke-linejoin="round"/></svg><span class="c-date" id="t99">09/16/2025</span><span class="c-payee" id="t100">Walmart</span><span class="pill"><span class="pt" id="t101">This needs a category</span></span><span class="c-out" id="t102">$92.40</span><span class="clr">C</span></div>
<div class="row" style="top:1139.64px"><span class="cb"></span><span class="inf">i</span><svg class="flag" viewBox="0 0 22 14" width="21.2" height="14"><path d="M1 1.2H20.6L17.2 7 20.6 12.8H1Z" fill="none" stroke="#5e5e5e" stroke-width="1.6" stroke-linejoin="round"/></svg><span class="c-date" id="t103">09/15/2025</span><span class="c-payee" id="t104">Uber</span><span class="pill"><span class="pt" id="t105">This needs a category</span></span><span class="c-memo" id="t106">Transportation</span><span class="c-out" id="t107">$86.42</span><span class="clr">C</span></div>
<div class="row" style="top:1185.36px"><span class="cb"></span><span class="inf">i</span><svg class="flag" viewBox="0 0 22 14" width="21.2" height="14"><path d="M1 1.2H20.6L17.2 7 20.6 12.8H1Z" fill="none" stroke="#5e5e5e" stroke-width="1.6" stroke-linejoin="round"/></svg><span class="pill"><span class="pt" id="t108">This needs a category</span></span><span class="clr">C</span></div>
</div>

<div id="menu">
  <!-- arrow -->
  <svg style="position:absolute;left:128px;top:421px" width="38" height="20" viewBox="0 0 38 20"><path d="M0 0H38L19 19.5Z" fill="#fff"/></svg>

  <!-- Mark as Uncleared (cy 27.8) -->
  <svg class="ico" style="top:17.6px" width="20.4" height="20.4" viewBox="0 0 20 20"><circle cx="10" cy="10" r="8.950" fill="none" stroke="#555" stroke-width="1.900"/><path d="M13.200 7.500A4 4 0 1 0 13.200 12.500" fill="none" stroke="#555" stroke-width="2.400"/></svg>
  <div id="t109" class="mi" style="top:17.6px">Mark as Uncleared</div>
  <div class="key" style="left:249.2px;top:15.3px;width:25px">C</div>
  <div class="dv" style="top:56px"></div>

  <!-- Match (cy 82.4) -->
  <svg class="ico" style="top:76.4px" width="21" height="12" viewBox="0 0 21 12"><g fill="none" stroke="#c2c2ba" stroke-width="2.400" stroke-linecap="round"><path d="M9.400 10.200H5.600a4.200 4.200 0 0 1 0-8.400H8.400a4.200 4.200 0 0 1 4.200 4.200"/><path d="M11.600 1.800H15.400a4.200 4.200 0 0 1 0 8.400H12.600a4.200 4.200 0 0 1-4.200-4.200"/></g></svg>
  <div id="t110" class="mi dis" style="top:72.3px">Match</div>
  <div class="key dis" style="left:249.2px;top:70px;width:25px">M</div>

  <!-- Unmatch (cy 123) -->
  <svg class="ico" style="top:116.6px" width="21" height="13" viewBox="0 0 21 13"><g fill="none" stroke="#c8c8c1" stroke-width="2.300" stroke-linecap="round"><path d="M7.400 2.300H5.600a4.200 4.200 0 0 0 0 8.400H7"/><path d="M14 2.300h1.400a4.200 4.200 0 0 1 0 8.400H13.600"/><path d="M11.700 1.400 11 4M10 9 9.300 11.600" stroke-width="2"/></g></svg>
  <div id="t111" class="mi dis" style="top:112.9px">Unmatch</div>
  <div class="key dis" style="left:198px;top:110.6px;width:45.4px"><span class="ct" id="t112">shift</span></div>
  <div class="key dis" style="left:249.2px;top:110.6px;width:25px">U</div>
  <div class="dv" style="top:148.8px"></div>

  <!-- Duplicate (cy 177.8) -->
  <svg class="ico" style="top:167px" width="20" height="21" viewBox="0 0 20 21"><path d="M8 0h6l5.6 5.6V15a1.6 1.6 0 0 1-1.6 1.6H8A1.6 1.6 0 0 1 6.4 15V1.6A1.6 1.6 0 0 1 8 0z" fill="#5e5e5c"/><path d="M14 0v4.2A1.4 1.4 0 0 0 15.4 5.6h4.2z" fill="#a9a9a4"/><path d="M4.6 4.2v12.2a2 2 0 0 0 2 2h8.8v.8A1.6 1.6 0 0 1 13.800 20.800H2.200A1.600 1.600 0 0 1 .6 19.200V5.800a1.600 1.600 0 0 1 1.600-1.600z" fill="#5e5e5c"/></svg>
  <div id="t113" class="mi" style="top:167.6px">Duplicate</div>
  <div class="key" style="left:198px;top:165.3px;width:45.4px"><span class="ct" id="t114">shift</span></div>
  <div class="key" style="left:249.2px;top:165.3px;width:25px">D</div>
  <div class="dv" style="top:206px"></div>

  <!-- Flag (cy 232.6) -->
  <svg class="ico" style="left:20.800px;top:226.400px" width="20" height="12.600" viewBox="0 0 21 13"><path d="M0 0H21L17.6 6.5 21 13H0Z" fill="#5e5e5c"/></svg>
  <div id="t115" class="mi" style="top:222.3px">Flag</div>
  <svg style="position:absolute;left:259px;top:224.4px" width="11" height="17" viewBox="0 0 11 17"><path d="M1.2 1.2 9.4 8.5 1.2 15.800" fill="none" stroke="#444" stroke-width="1.7" stroke-linecap="round" stroke-linejoin="round"/></svg>
  <div class="dv" style="top:259px"></div>

  <!-- Move to Account (cy 286.3) -->
  <svg class="ico" style="top:276.4px" width="21" height="20" viewBox="0 0 21 20"><g fill="none" stroke="#555" stroke-width="1.6" stroke-linecap="round" stroke-linejoin="round"><path d="M6.400 5.400V2.600a1.600 1.600 0 0 1 1.600-1.600h10.400a1.600 1.600 0 0 1 1.600 1.600v14.800a1.600 1.600 0 0 1-1.600 1.600H8a1.600 1.600 0 0 1-1.600-1.600v-2.800"/><path d="M.9 10h12.800M10 6.200l3.800 3.800-3.800 3.800"/></g></svg>
  <div id="t116" class="mi" style="top:276.1px">Move to Account</div>
  <svg style="position:absolute;left:259px;top:278px" width="11" height="17" viewBox="0 0 11 17"><path d="M1.2 1.2 9.4 8.5 1.2 15.800" fill="none" stroke="#444" stroke-width="1.7" stroke-linecap="round" stroke-linejoin="round"/></svg>
  <div class="dv" style="top:312.2px"></div>

  <!-- Export (cy 338.8) -->
  <svg class="ico" style="left:22.800px;top:328.200px" width="15.200" height="20.600" viewBox="0 0 16 21"><path d="M1.6 0H9.4L16 6.600V19.400A1.600 1.600 0 0 1 14.400 21H1.600A1.600 1.600 0 0 1 0 19.400V1.600A1.600 1.600 0 0 1 1.600 0z" fill="#5e5e5c"/><path d="M9.400 0v5a1.600 1.600 0 0 0 1.600 1.600h5z" fill="#b5b5b0"/><path d="M8 9.600v7.600M5 14.400l3 3 3-3" fill="none" stroke="#fff" stroke-width="1.5"/></svg>
  <div id="t117" class="mi" style="top:328.6px">Export 3 Transactions</div>
  <div class="dv" style="top:365.3px"></div>

  <!-- Delete (cy 394) -->
  <svg class="ico" style="left:21.400px;top:383.600px" width="18" height="21" viewBox="0 0 18 21"><path d="M6 1.400A1.400 1.400 0 0 1 7.400 0h3.200A1.400 1.400 0 0 1 12 1.400V2.200h4.600a1 1 0 0 1 1 1v1.600H.4V3.200a1 1 0 0 1 1-1H6zM1.800 6.400h14.400l-1 12.800A2 2 0 0 1 13.200 21H4.800a2 2 0 0 1-2-1.800z" fill="#5e5e5c"/></svg>
  <div id="t118" class="mi" style="top:383.9px">Delete</div>
  <div class="key" style="left:214px;top:382px;width:60.2px"><span class="ct" id="t119">delete</span></div>
</div>

<div id="bar">
  <svg style="position:absolute;left:21.500px;top:26.500px" width="9" height="9" viewBox="0 0 9 9"><path d="M.8.8 8.200 8.200M8.200.8.8 8.200" stroke="#fff" stroke-width="1.2" stroke-linecap="round"/></svg>
  <div id="t120" class="t" style="left:41px">3 Transactions</div>
  <div class="sep" style="left:176.500px"></div>
  <svg style="position:absolute;left:197.500px;top:22.700px" width="16" height="16" viewBox="0 0 16 16"><circle cx="8" cy="8" r="8" fill="#fff"/><path d="M4.400 8.300 7 10.800 11.600 5.600" fill="none" stroke="#1b1c55" stroke-width="1.8" stroke-linecap="round" stroke-linejoin="round"/></svg>
  <div id="t121" class="t" style="left:223px">Approve</div>
  <svg style="position:absolute;left:312px;top:22.700px" width="16" height="16" viewBox="0 0 16 16"><circle cx="8" cy="8" r="8" fill="#fff"/><path d="M5.300 5.300 10.700 10.700M10.700 5.300 5.300 10.700" stroke="#1b1c55" stroke-width="1.8" stroke-linecap="round"/></svg>
  <div class="t" style="left:337.500px">Reject</div>
  <svg style="position:absolute;left:411px;top:24.000px" width="13.500" height="13.500" viewBox="0 0 14 14"><rect x=".9" y=".9" width="12.200" height="12.200" rx="2" fill="none" stroke="#fff" stroke-width="1.600"/><path d="M.9 8.400h3.300l1 1.800h3.600l1-1.800h3.300v4.700H.9z" fill="#fff"/><path d="M4.600 4.800 6.400 6.500 9.600 3.200" fill="none" stroke="#fff" stroke-width="1.300" stroke-linecap="round" stroke-linejoin="round"/></svg>
  <div id="t122" class="t" style="left:435px">Categorize</div>
  <div class="sep" style="left:544px"></div>
  <svg style="position:absolute;left:565.400px;top:28.900px" width="15" height="4" viewBox="0 0 15 4"><circle cx="2" cy="2" r="1.600" fill="#fff"/><circle cx="7.500" cy="2" r="1.600" fill="#fff"/><circle cx="13" cy="2" r="1.600" fill="#fff"/></svg>
  <div class="t" style="left:591px">More</div>
</div>
<div id="help"><span class="ct" style="transform:scaleX(.9)">?</span></div>


</body>
</html>
